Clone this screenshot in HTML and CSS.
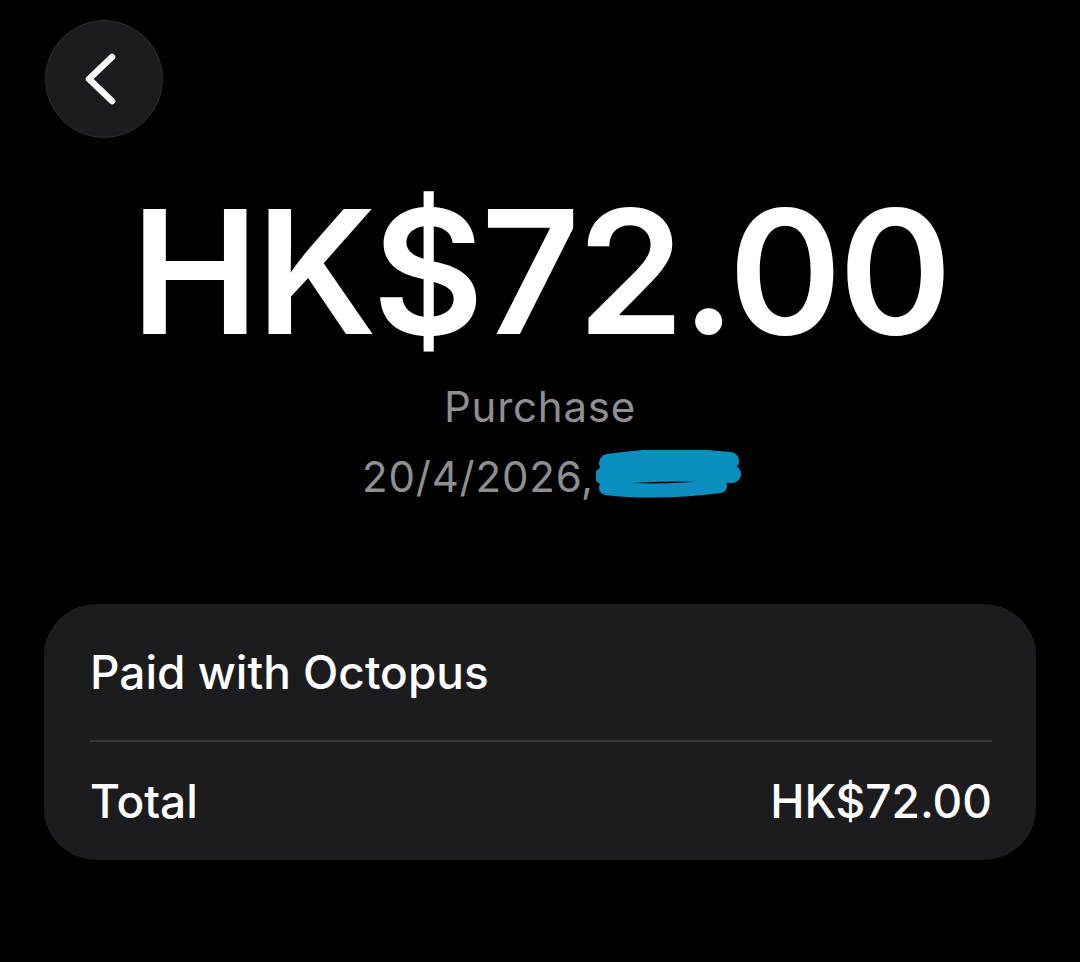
FILE: index.html
```html
<!DOCTYPE html>
<html lang="en">
<head>
    <meta charset="UTF-8">
    <meta name="viewport" content="width=device-width, initial-scale=1.0">
    <title>Transaction</title>
    <link rel="stylesheet" href="styles.css">
</head>
<body>
    <div class="screen">
        <div class="top-bar">
            <button class="back-btn" type="button" aria-label="Back">
                <svg width="40" height="60" viewBox="0 0 40 60">
                    <path d="M31 8 L8 30 L31 52" fill="none" stroke="#fff" stroke-width="6.5" stroke-linecap="round" stroke-linejoin="round"/>
                </svg>
            </button>
        </div>

        <div class="summary">
            <div class="amount">HK$72.00</div>
            <div class="kind">Purchase</div>
            <div class="date">20/4/2026,<svg class="scribble" width="146" height="50" viewBox="0 0 146 50">
                    <path d="M12 13 Q70 4 134 11" fill="none" stroke="#0a8fbf" stroke-width="18" stroke-linecap="round"/>
                    <path d="M8 26 Q70 20 136 24" fill="none" stroke="#0a8fbf" stroke-width="18" stroke-linecap="round"/>
                    <path d="M10 38 Q60 44 124 36" fill="none" stroke="#0a8fbf" stroke-width="14" stroke-linecap="round"/>
                </svg></div>
        </div>

        <div class="card">
            <div class="row row-method">Paid with Octopus</div>
            <div class="divider"></div>
            <div class="row row-total">
                <span>Total</span>
                <span>HK$72.00</span>
            </div>
        </div>
    </div>
</body>
</html>
```

FILE: styles.css
```css
html, body {
    margin: 0;
    padding: 0;
    background-color: #000;
}
body {
    font-family: Inter, "Noto Sans", sans-serif;
    color: #fff;
}
.screen {
    width: 1080px;
    height: 962px;
    padding-top: 20px;
    box-sizing: border-box;
}
.top-bar {
    padding-left: 45px;
}
.back-btn {
    width: 118px;
    height: 118px;
    border-radius: 50%;
    background-color: #1c1c1e;
    border: 1.5px solid #2e2e30;
    display: flex;
    align-items: center;
    justify-content: center;
    padding: 0 6px 0 0;
    cursor: pointer;
}
.summary {
    text-align: center;
    margin-top: 47px;
}
.amount {
    font-size: 172px;
    font-weight: 600;
    line-height: 173px;
    letter-spacing: -3px;
}
.kind, .date {
    font-size: 42px;
    line-height: 70px;
    letter-spacing: 0.8px;
    color: #8e8e93;
}
.kind {
    margin-top: 14px;
}
.date {
    padding-left: 24px;
}
.scribble {
    vertical-align: -8px;
    margin-left: 2px;
}
.card {
    margin: 92px 44px 0 44px;
    background-color: #1c1c1e;
    border-radius: 52px;
    padding: 0 44px 0 46px;
}
.row {
    display: flex;
    align-items: center;
    justify-content: space-between;
    font-size: 46px;
    font-weight: 500;
}
.row-method {
    height: 136px;
}
.row-total {
    height: 118px;
}
.divider {
    height: 2px;
    background-color: #38383a;
}
```
